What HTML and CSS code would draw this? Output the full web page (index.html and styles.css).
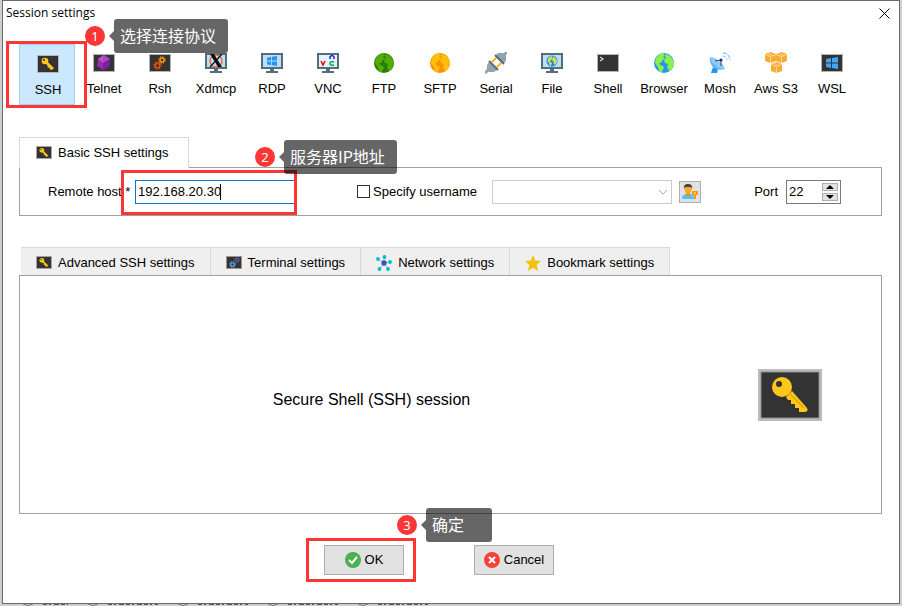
FILE: index.html
```html
<!DOCTYPE html>
<html lang="zh-CN">

<head>
    <meta charset="UTF-8">
    <meta name="viewport" content="width=device-width, initial-scale=1.0">
    <title>Session settings</title>
    <link rel="stylesheet" href="styles.css">
</head>

<body>
    <!-- shared icons -->
    <svg class="defs" width="0" height="0" aria-hidden="true">
        <symbol id="key" viewBox="0 0 64 52">
            <rect width="64" height="52" fill="#bcbcbc"/>
            <rect x="2.5" y="2.5" width="59" height="47" fill="#8d8d8d"/>
            <rect x="3.5" y="3.5" width="57" height="45" fill="#333"/>
            <path d="M28 28l6-6 15 17q2 4-3 4h-5v-4h-4v-4h-4v-4h-3z" fill="#ffc61e"/>
            <circle cx="24" cy="18" r="10" fill="#ffc61e"/>
            <path d="M32 25l14 14" stroke="#dda800" stroke-width="1.5"/>
            <circle cx="21" cy="15" r="3" fill="#333"/>
        </symbol>
        <symbol id="key-small" viewBox="0 0 22 18">
            <rect x=".5" y=".5" width="21" height="17" fill="#333" stroke="#b4b4b4"/>
            <path d="M9 7l7 7M12 11l-1 1M14 13l-1 1" stroke="#ffc61e" stroke-width="2.5"/>
            <circle cx="8" cy="6" r="3.3" fill="#ffc61e"/>
            <circle cx="7" cy="5" r="1" fill="#333"/>
        </symbol>
        <symbol id="monitor" viewBox="0 0 22 22">
            <path d="M0 1h22v16H0z" fill="#546e7a"/>
            <path d="M2 3h18v12H2z" fill="#bbdefb"/>
            <path d="M9 17h4v2h4v2H5v-2h4z" fill="#546e7a"/>
        </symbol>
        <symbol id="window" viewBox="0 0 12 12">
            <path d="M0 2l5-1v4.5H0zM6 .9L12 0v5.5H6zM0 6.5h5V11l-5-1zM6 6.5h6V12l-6-.9z"/>
        </symbol>
        <symbol id="land" viewBox="0 0 20 20">
            <path d="M2 5q3-4 7-5l2 2-2 2 2 1-3 3-1 2-2 0 1 2 3 1 1 2-2 3v2l-3-2-1-4-3-4zM12 1l4 2 3 4 1 4-2 5-3 2-2-4 1-3-3-1-1-3 2-2-1-2z"/>
        </symbol>
        <symbol id="gear" viewBox="0 0 12 12">
            <circle cx="6" cy="6" r="3" fill="none" stroke="currentColor" stroke-width="2"/>
            <circle cx="6" cy="6" r="4.8" fill="none" stroke="currentColor" stroke-width="1.8" stroke-dasharray="1.9 1.87"/>
        </symbol>
        <symbol id="cube" viewBox="0 0 11 11">
            <path d="M0 2l5.5-2L11 2v7l-5.500 2L0 9z" fill="#fbab34"/>
            <path d="M0 2.500L5.500 4.500 11 2.500M5.500 4.500V11M3 1.500l5 2" fill="none" stroke="#fff0d8" stroke-width=".6"/>
        </symbol>
    </svg>

    <div class="dialog">
        <div class="titlebar">
            <span class="title">Session settings</span>
            <button class="close" aria-label="Close">
                <svg width="11" height="11" viewBox="0 0 11 11"><path d="M.5.500l10 10M10.500.500l-10 10" stroke="#000"/></svg>
            </button>
        </div>

        <div class="tools">
            <div class="tool-wrap">
                <button class="tool active"><svg class="icon"><use href="#key-small" y="2" width="22" height="18"/></svg>SSH</button>
                <div class="mark mark-ssh"></div>
                <div class="tip tip-ssh"><i>1</i><span>选择连接协议</span></div>
            </div>
            <button class="tool">
                <svg class="icon" viewBox="0 0 22 22">
                    <rect x=".5" y="2.500" width="21" height="17" fill="#333" stroke="#b4b4b4"/>
                    <path d="M11 3l6 4-1 8-6 3-6-4 1-7z" fill="#9c27b0"/>
                    <path d="M11 3l-6 4 5 4z" fill="#ba56cc"/>
                    <path d="M11 3l6 4-7 4z" fill="#ab47bc"/>
                    <path d="M10 11l7-4-1 8-6 3z" fill="#7b1fa2"/>
                </svg>Telnet</button>
            <button class="tool">
                <svg class="icon" viewBox="0 0 22 22">
                    <rect x=".5" y="2.500" width="21" height="17" fill="#333" stroke="#b4b4b4"/>
                    <use href="#gear" x="9" y="4" width="8" height="8" color="#ff9800"/>
                    <use href="#gear" x="4" y="9" width="9" height="9" color="#e65100"/>
                </svg>Rsh</button>
            <button class="tool">
                <svg class="icon" viewBox="0 0 22 22">
                    <use href="#monitor"/>
                    <circle cx="11" cy="9" r="6" fill="none" stroke="#f26b3a" stroke-width="1.500"/>
                    <path d="M5 2h4l8 13h-4z" fill="#111"/>
                    <path d="M17 2L5 15" stroke="#111" stroke-width="1.200"/>
                </svg>Xdmcp</button>
            <button class="tool">
                <svg class="icon" viewBox="0 0 22 22">
                    <use href="#monitor"/>
                    <use href="#window" x="6" y="4" width="10" height="10" fill="#2196f3"/>
                </svg>RDP</button>
            <button class="tool">
                <svg class="icon" viewBox="0 0 22 22">
                    <use href="#monitor"/>
                    <path d="M2 3h18v12H2z" fill="#e3f2fd"/>
                    <path d="M4 9l2 4 2-4" fill="none" stroke="#e00" stroke-width="1.500"/>
                    <path d="M13 7V5q2-3 4 0v2" fill="none" stroke="#22c" stroke-width="1.500"/>
                    <path d="M17 10q-4-1-4 1.500t4 1.500" fill="none" stroke="#0a4" stroke-width="1.500"/>
                </svg>VNC</button>
            <button class="tool">
                <svg class="icon" viewBox="0 0 22 22">
                    <circle cx="11" cy="11" r="10" fill="#2e7d00"/>
                    <use href="#land" x="1" y="1" width="20" height="20" fill="#4fae0c"/>
                </svg>FTP</button>
            <button class="tool">
                <svg class="icon" viewBox="0 0 22 22">
                    <circle cx="11" cy="11" r="10" fill="#ff8f00"/>
                    <use href="#land" x="1" y="1" width="20" height="20" fill="#ffc107"/>
                </svg>SFTP</button>
            <button class="tool">
                <svg class="icon" viewBox="0 0 22 22">
                    <path d="M7 10l4-4M12 15l4-4" stroke="#ffb300" stroke-width="2"/>
                    <path d="M0 21l3-3M19 3l3-3" stroke="#90a4ae" stroke-width="3"/>
                    <path d="M4 10l8 8-3 2H4l-2-2v-5zM10 4l8 8 3-3V3l-3-2h-5z" fill="#90a4ae"/>
                    <path d="M4 9l9 9M10 3l9 9" stroke="#546e7a" stroke-width="2"/>
                </svg>Serial</button>
            <button class="tool">
                <svg class="icon" viewBox="0 0 22 22">
                    <use href="#monitor"/>
                    <circle cx="11" cy="9" r="5.500" fill="#1e88e5"/>
                    <use href="#land" x="6" y="4" width="10" height="10" fill="#d4e157"/>
                </svg>File</button>
            <button class="tool">
                <svg class="icon" viewBox="0 0 22 22">
                    <rect x=".5" y="2.500" width="21" height="17" fill="#333" stroke="#b4b4b4"/>
                    <path d="M3 5l3 2-3 2" fill="none" stroke="#ddd" stroke-width="1.200"/>
                </svg>Shell</button>
            <button class="tool">
                <svg class="icon" viewBox="0 0 22 22">
                    <circle cx="11" cy="11" r="10" fill="#2196f3"/>
                    <use href="#land" x="1" y="1" width="20" height="20" fill="#8bf04a"/>
                </svg>Browser</button>
            <button class="tool">
                <svg class="icon" viewBox="0 0 22 22">
                    <path d="M4 15l-2 6h6l1-4z" fill="#2196f3"/>
                    <path d="M1 5q-1 7 4 11 5 3 11 1z" fill="#64b5f6"/>
                    <path d="M1 5q5 0 9 4 5 4 6 8-6 0-10-4-4-3-5-8z" fill="#90caf9"/>
                    <path d="M6 9l6-1v6" fill="none" stroke="#37474f"/>
                    <circle cx="12" cy="8" r="1.500" fill="#1a237e"/>
                    <path d="M14 4q3 0 4 4M14 1q6 0 7 7" fill="none" stroke="#64b5f6" stroke-dasharray="4 1"/>
                </svg>Mosh</button>
            <button class="tool">
                <svg class="icon" viewBox="0 0 22 22">
                    <use href="#cube" x="0" y="0" width="11" height="11"/>
                    <use href="#cube" x="11" y="0" width="11" height="11"/>
                    <use href="#cube" x="6" y="10" width="11" height="11"/>
                </svg>Aws S3</button>
            <button class="tool">
                <svg class="icon" viewBox="0 0 22 22">
                    <rect x=".5" y="2.500" width="21" height="17" fill="#333" stroke="#b4b4b4"/>
                    <use href="#window" x="5" y="5" width="12" height="12" fill="#42a5f5"/>
                </svg>WSL</button>
        </div>

        <div class="tabs tabs-basic">
            <button class="tab active"><svg class="tab-icon"><use href="#key-small" y="1" width="16" height="13"/></svg>Basic SSH settings</button>
        </div>
        <div class="panel basic">
            <div class="host">
                <label for="host">Remote host *</label>
                <input type="text" id="host" value="192.168.20.30">
                <span class="caret"></span>
                <div class="mark mark-host"></div>
                <div class="tip tip-host"><i>2</i><span>服务器IP地址</span></div>
            </div>
            <div class="user">
                <input type="checkbox" id="specify">
                <label for="specify">Specify username</label>
                <select aria-label="Username" disabled></select>
                <button class="user-btn" aria-label="Manage users">
                    <svg width="18" height="18" viewBox="0 0 18 18">
                        <path d="M1 16q0-5 5-5h3q4 0 4 5z" fill="#4fc3f7"/>
                        <path d="M5 9h4v3q-2 2-4 0z" fill="#fb8c00"/>
                        <ellipse cx="7" cy="6" rx="3.500" ry="4.500" fill="#ffa726"/>
                        <path d="M3 6q-1-5 4-5 5 0 4 5l-1-2H4z" fill="#424242"/>
                        <path d="M11 8h6v4h-2v4h-2v-4h-2z" fill="#ff9800"/>
                        <path d="M13 10h2" stroke="#fff3e0"/>
                    </svg>
                </button>
            </div>
            <div class="port">
                <label for="port">Port</label>
                <div class="spin">
                    <input type="text" id="port" value="22">
                    <div class="spin-btns">
                        <button aria-label="Up"><svg width="8" height="4"><path d="M0 4l4-4 4 4z"/></svg></button>
                        <button aria-label="Down"><svg width="8" height="4"><path d="M0 0l4 4 4-4z"/></svg></button>
                    </div>
                </div>
            </div>
        </div>

        <div class="tabs tabs-more">
            <button class="tab"><svg class="tab-icon"><use href="#key-small" y="1" width="16" height="13"/></svg>Advanced SSH settings</button>
            <button class="tab">
                <svg class="tab-icon" viewBox="0 0 16 16">
                    <rect x=".5" y="1.500" width="15" height="12" fill="#333" stroke="#999"/>
                    <use href="#gear" x="8" y="2" width="6" height="6" color="#5c6bc0"/>
                    <use href="#gear" x="3" y="6" width="7" height="7" color="#64b5f6"/>
                </svg>Terminal settings</button>
            <button class="tab">
                <svg class="tab-icon" viewBox="0 0 16 16">
                    <path d="M8 8L2 4M8 8V2M8 8l6-1M8 8l4 6M8 8l-4 6" stroke="#b0bec5"/>
                    <circle cx="8" cy="8" r="2.700" fill="#3f51b5"/>
                    <g fill="#00bcd4"><circle cx="2" cy="4" r="1.900"/><circle cx="8.500" cy="2" r="1.900"/><circle cx="14" cy="7" r="1.900"/><circle cx="12" cy="14" r="1.900"/><circle cx="3.500" cy="14" r="1.900"/></g>
                </svg>Network settings</button>
            <button class="tab">
                <svg class="tab-icon" viewBox="0 0 16 16"><path d="M8 0l2.300 5.500 5.700.5-4.300 4 1.300 6-5-3.200L3 16l1.300-6L0 6l5.700-.5z" fill="#f4c20d"/></svg>Bookmark settings</button>
        </div>
        <div class="panel session">
            <p>Secure Shell (SSH) session</p>
            <svg class="big-key" width="64" height="52"><use href="#key"/></svg>
        </div>

        <div class="footer">
            <div class="ok-wrap">
                <button class="btn">
                    <svg width="16" height="16" viewBox="0 0 16 16"><circle cx="8" cy="8" r="8" fill="#4caf50"/><path d="M4 8l3 3 5-6" fill="none" stroke="#fff" stroke-width="2"/></svg>OK</button>
                <div class="mark mark-ok"></div>
                <div class="tip tip-ok"><i>3</i><span>确定</span></div>
            </div>
            <button class="btn">
                <svg width="16" height="16" viewBox="0 0 16 16"><circle cx="8" cy="8" r="8" fill="#f44336"/><path d="M5 5l6 6M11 5l-6 6" stroke="#fff" stroke-width="2"/></svg>Cancel</button>
        </div>
    </div>
    <!-- edge of the window behind -->
    <svg class="behind" width="430" height="2" aria-hidden="true">
        <path d="M41 .5h25M106 .5h50M196 .5h50M286 .5h50M376 .5h50" stroke="#555" stroke-dasharray="4 2 2 3 5 2"/>
        <path d="M21 0q5 3 10 0M86 0q5 3 10 0M176 0q5 3 10 0M266 0q5 3 10 0M356 0q5 3 10 0" fill="none" stroke="#777"/>
    </svg>
</body>

</html>
```
FILE: styles.css
```css
* {
    box-sizing: border-box;
}
body {
    margin: 0;
    padding: 0 2px;
    background-color: #cfcfcf;
    color: #000;
    font: 13px/16px "Liberation Sans", Arial, "Noto Sans CJK SC", sans-serif;
}
button , input , select {
    margin: 0;
    padding: 0;
    font: inherit;
    color: inherit;
    border-radius: 0;
}
.defs {
    position: absolute;
}
.behind {
    display: block;
}
.dialog {
    padding: 0 17px 28px 16px;
    border: 1px solid #6b6b6b;
    background-color: #fff;
}

/* title */
.titlebar {
    display: flex;
    justify-content: space-between;
    align-items: center;
    height: 24px;
    margin: 0 -13px;
}
.title {
    font-family: "Open Sans", "Noto Sans", sans-serif;
    font-size: 12px;
}
.close {
    display: flex;
    padding: 5px;
    border: 0;
    background: none;
}

/* protocols */
.tools {
    display: grid;
    grid-template-columns: repeat(15, minmax(0, 56px));
    margin-top: 19px;
}
.tool-wrap , .ok-wrap {
    position: relative;
}
.tool {
    display: flex;
    flex-direction: column;
    align-items: center;
    gap: 7px;
    width: 100%;
    height: 61px;
    padding: 7px 0 0 2px;
    border: 1px solid transparent;
    background: none;
    white-space: nowrap;
}
.tool.active {
    padding-top: 8px;
    border-color: #99d1ff;
    background-color: #cce8ff;
}
.icon {
    width: 22px;
    height: 22px;
    flex: none;
}

/* tabs */
.tabs {
    display: flex;
}
.tabs-basic {
    margin-top: 32px;
}
.tabs-more {
    margin: 31px 2px 0;
}
.tab {
    display: flex;
    align-items: center;
    gap: 6px;
    height: 28px;
    padding: 2px 15px 0;
    border: 1px solid #d9d9d9;
    border-width: 1px 1px 0 0;
    background-color: #efefef;
    white-space: nowrap;
}
.tab.active {
    position: relative;
    z-index: 1;
    height: 31px;
    margin-bottom: -1px;
    padding: 0 19px 0 16px;
    border-left-width: 1px;
    background-color: #fff;
}
.tab-icon {
    width: 16px;
    height: 16px;
}

.panel {
    display: flex;
    align-items: center;
    border: 1px solid #a0a0a0;
}
.basic {
    min-height: 49px;
    padding: 0 40px 0 28px;
}
.host , .user , .port {
    display: flex;
    align-items: center;
    white-space: nowrap;
}
.host {
    position: relative;
    justify-content: space-between;
    width: 247px;
}
.host input {
    width: 160px;
    height: 24px;
    padding: 0 2px;
    border: 1px solid #0078d7;
    outline: 0;
}
.caret {
    position: absolute;
    left: 172px;
    top: 4px;
    width: 1px;
    height: 16px;
    background-color: #000;
}
.user {
    flex: 1;
    margin: 0 53px 0 62px;
}
.user input {
    appearance: none;
    width: 13px;
    height: 13px;
    margin-right: 3px;
    border: 1px solid #333;
    background-color: #fff;
}
.user input:checked {
    background-color: #333;
    box-shadow: inset 0 0 0 2px #fff;
}
.user select {
    appearance: none;
    flex: 1;
    height: 24px;
    margin: 0 7px 0 15px;
    border: 1px solid #ccc;
    background: #fff url("data:image/svg+xml,%3Csvg xmlns='http://www.w3.org/2000/svg' width='10' height='6'%3E%3Cpath d='M1 1l4 4 4-4' fill='none' stroke='%23aaa'/%3E%3C/svg%3E") no-repeat right 3px center;
    opacity: 1;
}
.user-btn {
    display: flex;
    justify-content: center;
    align-items: center;
    width: 22px;
    height: 22px;
    border: 1px solid #adadad;
    background-color: #e1e1e1;
}
.port {
    gap: 8px;
}
.spin {
    display: flex;
    width: 55px;
    height: 24px;
    border: 1px solid #7a7a7a;
}
.spin input {
    width: 35px;
    padding-left: 2px;
    border: 0;
    background: none;
}
.spin-btns {
    display: flex;
    flex-direction: column;
    justify-content: center;
    gap: 2px;
}
.spin-btns button {
    display: flex;
    justify-content: center;
    align-items: center;
    width: 16px;
    height: 8px;
    border: 1px solid #adadad;
    background-color: #e1e1e1;
}

.session {
    min-height: 239px;
    padding-right: 59px;
}
.session p {
    flex: 1;
    margin: 10px 35px 0 0;
    font-size: 16px;
    line-height: 20px;
    text-align: center;
}

/* buttons */
.footer {
    display: flex;
    justify-content: center;
    gap: 70px;
    margin-top: 31px;
    padding-right: 23px;
}
.btn {
    display: flex;
    justify-content: center;
    align-items: center;
    gap: 4px;
    width: 80px;
    height: 30px;
    border: 1px solid #adadad;
    background-color: #e1e1e1;
}

/* red frames and numbered notes */
.mark {
    position: absolute;
    z-index: 2;
    border: 3px solid #fc3535;
    pointer-events: none;
}
.mark-ssh {
    left: -13px;
    top: -3px;
    width: 81px;
    height: 67px;
}
.mark-host {
    left: 73px;
    top: -10px;
    width: 176px;
    height: 45px;
}
.mark-ok {
    left: -18px;
    top: -7px;
    width: 110px;
    height: 44px;
}
.tip {
    position: absolute;
    z-index: 3;
    display: flex;
    align-items: center;
    gap: 9px;
    color: #fff;
    white-space: nowrap;
}
.tip-ssh {
    left: 66px;
    top: -25px;
}
.tip-host {
    left: 207px;
    top: -40px;
}
.tip-ok {
    left: 73px;
    top: -37px;
}
.tip i {
    width: 20px;
    border-radius: 50%;
    background-color: #fc3535;
    font: 13px/20px "Noto Sans", sans-serif;
    text-align: center;
}
.tip span {
    position: relative;
    min-width: 66px;
    padding: 0 12px 2px 6px;
    border-radius: 3px;
    background-color: rgba(0, 0, 0, .6);
    font: 16px/32px "Noto Sans CJK SC", sans-serif;
}
.tip span::before {
    content: "";
    position: absolute;
    left: -5px;
    top: 12px;
    border: 5px solid transparent;
    border-left: 0;
    border-right-color: rgba(0, 0, 0, .6);
}
```
